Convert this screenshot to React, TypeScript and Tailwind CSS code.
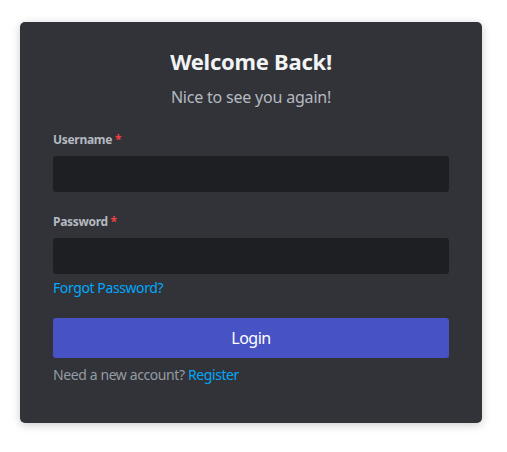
export default function App() {
  return (
    <div
      className="min-h-screen bg-white pl-5 pt-[22px]"
      style={{ fontFamily: '"Noto Sans", "Open Sans", sans-serif' }}
    >
      <div className="w-[462px] h-[401px] rounded-[5px] bg-[#313338] px-[33px] pt-[24px] shadow-[0_2px_10px_0_rgba(0,0,0,0.2)]">
        <h1 className="text-center text-[22px] leading-[30px] font-bold tracking-[-0.25px] text-[#f2f3f5]">
          Welcome Back!
        </h1>
        <p className="mt-[11px] text-center text-[16px] leading-[20px] tracking-[-0.2px] text-[#b5bac1]">
          Nice to see you again!
        </p>

        <form className="mt-[25px]" onSubmit={(e) => e.preventDefault()}>
          <label className="block mb-2 text-[12px] leading-[16px] font-bold tracking-[-0.3px] text-[#b5bac1]">
            Username <span className="text-[#f23f42]">*</span>
          </label>
          <input
            type="text"
            className="block w-full h-9 rounded-[3px] bg-[#1e1f22] px-2.5 text-[16px] text-[#dbdee1] outline-none"
          />

          <label className="block mt-[22px] mb-2 text-[12px] leading-[16px] font-bold tracking-[-0.3px] text-[#b5bac1]">
            Password <span className="text-[#f23f42]">*</span>
          </label>
          <input
            type="password"
            className="block w-full h-9 rounded-[3px] bg-[#1e1f22] px-2.5 text-[16px] text-[#dbdee1] outline-none"
          />
          <a
            href="#"
            className="inline-block mt-1 text-[14px] leading-[20px] tracking-[-0.4px] text-[#00a8fc]"
          >
            Forgot Password?
          </a>

          <button
            type="submit"
            className="block w-full mt-[19px] h-10 rounded-[3px] bg-[#4752c4] text-[16px] tracking-[-0.5px] text-white"
          >
            Login
          </button>
          <div className="mt-[9px] text-[14px] leading-[16px] tracking-[-0.4px] text-[#949ba4]">
            Need a new account?{" "}
            <a href="#" className="text-[#00a8fc]">
              Register
            </a>
          </div>
        </form>
      </div>
    </div>
  );
}
